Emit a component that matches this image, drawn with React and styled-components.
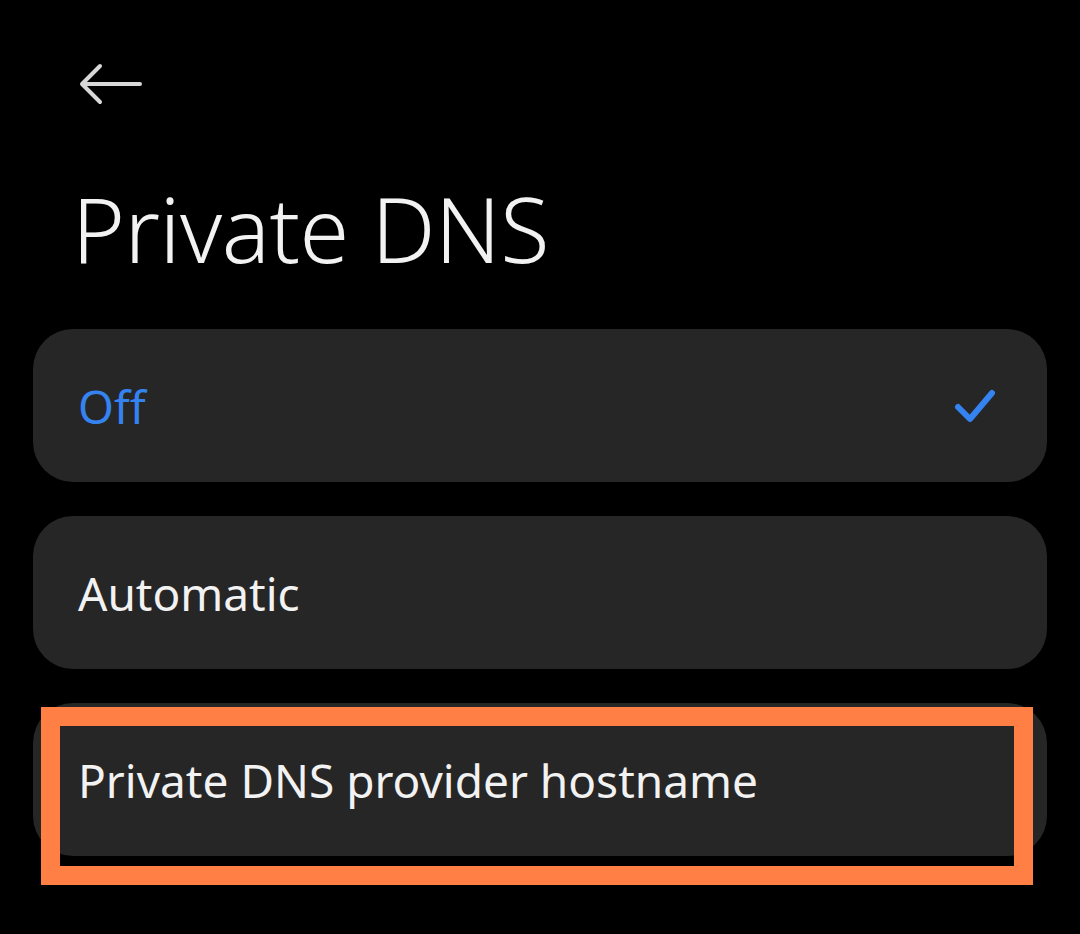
import React from 'react';
import styled, { createGlobalStyle } from 'styled-components';

const GlobalStyle = createGlobalStyle`
  html, body {
    margin: 0;
    background: #000;
  }
  body {
    font-family: 'Noto Sans', 'Liberation Sans', sans-serif;
    color: #f2f2f2;
  }
`;

const Screen = styled.div`
  width: 1080px;
  height: 934px;
  background: #000;
  overflow: hidden;
  display: flex;
  flex-direction: column;
`;

const TopBar = styled.div`
  height: 166px;
  padding: 62px 0 0 78px;
  box-sizing: border-box;
`;

const BackButton = styled.button`
  background: none;
  border: 0;
  padding: 0;
  width: 64px;
  height: 44px;
  display: flex;
  align-items: center;
  cursor: pointer;
`;

const Title = styled.h1`
  margin: 0;
  padding: 0 0 0 72px;
  font-size: 90px;
  font-weight: 300;
  line-height: 160px;
  letter-spacing: -0.5px;
  color: #f2f2f2;
  margin-top: -18px;
`;

const List = styled.div`
  display: flex;
  flex-direction: column;
  gap: 34px;
  padding: 21px 33px 0;
`;

const Option = styled.div`
  position: relative;
  height: 153px;
  border-radius: 40px;
  background: #262626;
  display: flex;
  align-items: center;
  justify-content: space-between;
  padding: 0 50px 0 45px;
`;

const Label = styled.span`
  font-size: 46px;
  font-weight: 400;
  color: ${p => (p.selected ? '#3583f0' : '#f2f2f2')};
`;

const Highlight = styled.div`
  position: absolute;
  left: 8px;
  top: 4px;
  width: 992px;
  height: 178px;
  box-sizing: border-box;
  border: 19px solid #ff7f45;
  pointer-events: none;
`;

const BackArrow = () => (
  <svg width="64" height="44" viewBox="0 0 64 44" fill="none">
    <path
      d="M62 22H4M22 4L4 22l18 18"
      stroke="#d8d8d8"
      strokeWidth="4"
      strokeLinecap="round"
      strokeLinejoin="round"
    />
  </svg>
);

const Check = () => (
  <svg width="44" height="36" viewBox="0 0 44 36" fill="none">
    <path
      d="M5 19l12 12L39 5"
      stroke="#3583f0"
      strokeWidth="6"
      strokeLinecap="round"
      strokeLinejoin="round"
    />
  </svg>
);

const options = [
  { label: 'Off', selected: true },
  { label: 'Automatic' },
  { label: 'Private DNS provider hostname', marked: true },
];

export default function App() {
  return (
    <Screen>
      <GlobalStyle />
      <TopBar>
        <BackButton aria-label="Back">
          <BackArrow />
        </BackButton>
      </TopBar>
      <Title>Private DNS</Title>
      <List>
        {options.map(opt => (
          <Option key={opt.label}>
            <Label selected={opt.selected}>{opt.label}</Label>
            {opt.selected && <Check />}
            {opt.marked && <Highlight />}
          </Option>
        ))}
      </List>
    </Screen>
  );
}
